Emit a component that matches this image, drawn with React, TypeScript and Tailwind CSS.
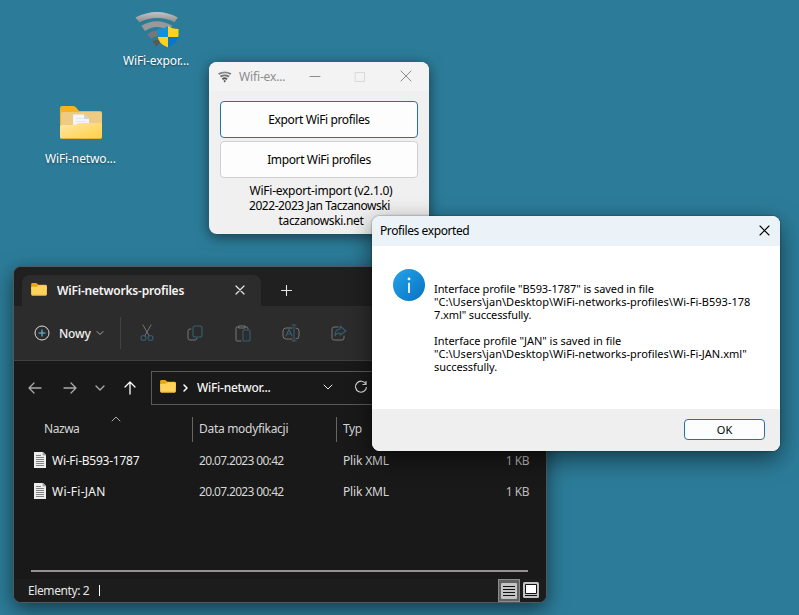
import type { ReactNode } from "react";

const glyph = "block shrink-0";

function Wifi({ className }: { className: string }) {
  return (
    <svg viewBox="0 0 48 38" className={className} fill="none">
      <defs>
        <linearGradient id="wave" x1="0" y1="0" x2="0" y2="1">
          <stop offset="0" stopColor="#c4c4c4" />
          <stop offset="1" stopColor="#8d8d8d" />
        </linearGradient>
      </defs>
      <path d="M0 6Q24 -6 46 6L42.500 11Q24 2 4.500 11Z" fill="url(#wave)" />
      <path d="M6.500 15Q23 5 40 15L36 20.500Q23 12 10.500 20.500Z" fill="#999" />
      <path d="M13 24Q23 16 33 24L29 29Q23 24 17 29Z" fill="#777" />
      <path d="M18.500 32Q23 28 27.500 32L23 38Z" fill="#595959" />
    </svg>
  );
}

function Shield() {
  return (
    <svg viewBox="0 0 22 22" className="absolute left-[22px] top-[14px] h-[22px] w-[22px]">
      <defs>
        <clipPath id="shield">
          <path d="M11 0Q7 3 .5 3V9Q1 18 11 21.500Q21 18 21.500 9V3Q15 3 11 0Z" />
        </clipPath>
      </defs>
      <g clipPath="url(#shield)">
        <path d="M0 0h11v11H0z" fill="#148fd9" />
        <path d="M11 0h11v11H11zM0 11h11v11H0z" fill="#ffd21d" />
        <path d="M11 11h11v11H11z" fill="#0b76c8" />
      </g>
    </svg>
  );
}

function BigFolder() {
  return (
    <svg viewBox="0 0 44 36" className="block h-[36px] w-[44px]">
      <defs>
        <linearGradient id="front" x1="0" y1="0" x2="1" y2="1">
          <stop offset="0" stopColor="#ffe7a3" />
          <stop offset="1" stopColor="#ffcf45" />
        </linearGradient>
      </defs>
      <path d="M1 3Q1 1 3 1H14Q16 1 17.500 3L20 6H41Q43 6 43 8V26H1Z" fill="#f6b51c" />
      <path d="M2 9Q2 7 4 7H41Q43 7 43 9V26H2Z" fill="#edcb83" />
      <path d="M14 9.500H25L30 14V25H14Z" fill="#f4f5f8" />
      <path d="M25 9.500V14H30Z" fill="#cfd2d8" />
      <path d="M17 13.500h7M17 16.500h10" stroke="#e3e5ea" />
      <path d="M1 22Q1 20 3 20H14Q16 20 18 19L20 18H41Q43 18 43 20V32Q43 34 41 34H3Q1 34 1 32Z" fill="url(#front)" />
      <path d="M2 33.500H42" stroke="#e8b23e" />
    </svg>
  );
}

function Folder() {
  return (
    <svg viewBox="0 0 17 14" className={`${glyph} mb-[2px] h-[13px] w-4`}>
      <path d="M0 1.500Q0 0 1.500 0H5.500L8 2H15.500Q17 2 17 3.500V7H0Z" fill="#e9a514" />
      <path d="M0 5Q0 4 1 4H6L8 2.500H15.500Q17 2.500 17 4V12Q17 13.500 15.500 13.500H1.500Q0 13.500 0 12Z" fill="#ffd25c" />
      <path d="M1 13H16" stroke="#eeb53b" />
    </svg>
  );
}

function Doc() {
  return (
    <svg viewBox="0 0 12 16" className={`${glyph} mb-[2px] h-4 w-3`}>
      <path d="M0 0H9L12 3V16H0Z" fill="#ededed" />
      <path d="M9 0V3H12" fill="#aaa" stroke="#888" strokeWidth=".6" />
      <path d="M2 3.500h5M2 5.500h8M2 7.500h8M2 9.500h8M2 11.500h8M2 13.500h8" stroke="#777" strokeWidth=".9" />
    </svg>
  );
}

function Line({ d, className, size = 16, w = 1 }: { d: string; className: string; size?: number; w?: number }) {
  return (
    <svg viewBox={`0 0 ${size} ${size}`} className={`${glyph} ${className}`} fill="none" stroke="currentColor" strokeWidth={w} strokeLinecap="round" strokeLinejoin="round">
      <path d={d} />
    </svg>
  );
}

function Tool({ gray, blue }: { gray: string; blue: string }) {
  return (
    <svg viewBox="0 0 18 18" className={`${glyph} h-[18px] w-[18px]`} fill="none" strokeLinecap="round" strokeLinejoin="round">
      <path d={gray} stroke="#767676" />
      <path d={blue} stroke="#365f73" strokeWidth="1.100" />
    </svg>
  );
}

function Row({ name, nameClass }: { name: string; nameClass: string }) {
  return (
    <div className="flex h-[31px] items-center pl-5 text-[#d6d6d6]">
      <Doc />
      <span className="ml-[6px] w-[147px] text-[#f5f5f5]"><span className={nameClass}>{name}</span></span>
      <span className="w-36 tracking-[-0.66px]">20.07.2023 00:42</span>
      <span className="w-[120px] tracking-[-0.15px]">Plik XML</span>
      <span className="w-[66px] text-right tracking-[-0.5px] text-[#bcbcbc]">1 KB</span>
    </div>
  );
}

function DesktopLabel({ children }: { children: ReactNode }) {
  return <span className="whitespace-nowrap tracking-[-0.12px] text-white [text-shadow:0_1px_2px_#0007]">{children}</span>;
}

export default function App() {
  return (
    <main className="relative h-[615px] w-[799px] overflow-hidden bg-[#2c7c99] font-['Noto_Sans','Open_Sans',sans-serif] text-[12px] leading-[15px]">
      <div className="absolute left-[116px] top-[12px] flex w-20 flex-col">
        <div className="relative ml-[19px] h-[41px]">
          <Wifi className="h-[35px] w-[45px]" />
          <Shield />
        </div>
        <span className="ml-[7px] whitespace-nowrap"><DesktopLabel>WiFi-expor...</DesktopLabel></span>
      </div>
      <div className="absolute left-[45px] top-[105px] flex flex-col">
        <div className="ml-[14px] h-[46px]"><BigFolder /></div>
        <DesktopLabel>WiFi-netwo...</DesktopLabel>
      </div>

      <section className="absolute left-[209px] top-[62px] flex h-[172px] w-[220px] flex-col rounded-lg bg-[#f0f0f0] shadow-[0_3px_14px_#0008]">
        <header className="flex h-[29px] items-center rounded-t-lg bg-[#f3f3f3] pl-[9px] text-[#8c8c8c]">
          <Wifi className="h-3 w-[14px] shrink-0 brightness-75" />
          <span className="ml-[7px] w-[70px] tracking-[-0.15px]">Wifi-ex...</span>
          <Line d="M1 5.500H11" size={12} className="h-3 w-3" />
          <Line d="M1.500 1.500H10.500V10.500H1.500Z" size={12} className="ml-[33px] h-3 w-3 text-[#d9d9d9]" />
          <Line d="M1 1L11 11M11 1L1 11" size={12} className="ml-[34px] mb-[2px] h-3 w-3" />
        </header>
        <div className="flex flex-col gap-[3px] px-[11px] pt-[10px] tracking-[-0.38px] text-black">
          <button className="h-[37px] rounded-[4px] border border-[#2372ac] bg-[#fdfdfd]">Export WiFi profiles</button>
          <button className="h-[37px] rounded-[4px] border border-[#d0d0d0] bg-[#fdfdfd]">Import WiFi profiles</button>
        </div>
        <div className="mt-[5px] flex flex-col items-center pl-1 text-black">
          <span className="tracking-[-0.26px]">WiFi-export-import (v2.1.0)</span>
          <span className="mr-[3px] tracking-[-0.45px]">2022-2023 Jan Taczanowski</span>
          <span className="tracking-[-0.35px]">taczanowski.net</span>
        </div>
      </section>

      <section className="absolute left-[13px] top-[266px] flex h-[337px] w-[534px] flex-col overflow-hidden rounded-lg border border-[#4e5a5e] bg-[#191919] text-[#e6e6e6] shadow-[0_6px_20px_#0008]">
        <header className="flex h-[39px] shrink-0 items-end bg-[#202020] pl-2">
          <div className="flex h-[31px] w-[239px] items-center rounded-t-lg bg-[#2c2c2c] pl-[9px]">
            <Folder />
            <strong className="ml-[10px] w-[178px] font-semibold tracking-[-0.2px] text-[#f5f5f5]">WiFi-networks-profiles</strong>
            <Line d="M1 1L9 9M9 1L1 9" size={10} w={1.2} className="mb-[2px] h-[10px] w-[10px]" />
          </div>
          <Line d="M6.500 .5V10.500M1.500 5.500H11.500" size={12} w={1.1} className="mb-[9px] ml-[19px] h-3 w-3" />
        </header>
        <div className="flex h-[55px] shrink-0 items-center border-b border-[#414141] bg-[#2c2c2c] pl-5">
          <svg viewBox="0 0 16 16" className="h-4 w-4" fill="none">
            <circle cx="8" cy="8" r="7" stroke="#ddd" />
            <path d="M8 4.500V11.500M4.500 8H11.500" stroke="#65c6ef" strokeWidth="1.100" />
          </svg>
          <span className="ml-[9px] w-[37px] font-medium tracking-[-0.2px] text-[#f0f0f0]">Nowy</span>
          <Line d="M1 2.500L4 5.500L7 2.500" size={8} className="h-2 w-2 text-[#aaa]" />
          <i className="ml-4 h-8 w-px bg-[#434343]" />
          <div className="ml-[17px] flex gap-[30px]">
            <Tool gray="M5 1L11.300 12M13 1L6.700 12" blue="M8 14A2.500 2.500 0 1 1 3 14A2.500 2.500 0 1 1 8 14M15 14A2.500 2.500 0 1 1 10 14A2.500 2.500 0 1 1 15 14" />
            <Tool gray="M5 5H4Q2 5 2 7V14Q2 16 4 16H9Q11 16 11 14" blue="M9 2H14Q16 2 16 4V11Q16 13 14 13H9Q7 13 7 11V4Q7 2 9 2Z" />
            <Tool gray="M5 3H3Q2 3 2 4V16Q2 17 3 17H7M11 3H13Q14 3 14 5M5 2H11V4H5Z" blue="M10 6H15Q16 6 16 7V16Q16 17 15 17H10Q9 17 9 16V7Q9 6 10 6Z" />
            <Tool gray="M10 4H4Q1 4 1 7V12Q1 15 4 15H10M14 4Q17 4 17 7V12Q17 15 14 15" blue="M12 1V17M10 1H14M10 17H14M4 12L7 5.500L10 12M5 10H9" />
            <Tool gray="M8 3H4Q2 3 2 5V14Q2 16 4 16H12Q14 16 14 14V12" blue="M10 2L16 7L10 11V9Q6 9 5 12Q5 5 10 5Z" />
          </div>
        </div>
        <div className="flex h-[54px] shrink-0 items-center pl-[14px]">
          <Line d="M13 7H1M6 2L1 7L6 12" size={14} w={1.3} className="h-[14px] w-[14px] text-[#aaa]" />
          <Line d="M1 7H13M8 2L13 7L8 12" size={14} w={1.3} className="ml-[21px] h-[14px] w-[14px] text-[#aaa]" />
          <Line d="M1 3L5 7L9 3" size={10} w={1.3} className="ml-[18px] h-[10px] w-[10px] text-[#aaa]" />
          <Line d="M7 13V1M2 6L7 1L12 6" size={14} w={1.3} className="ml-[18px] h-[14px] w-[14px] text-white" />
          <div className="ml-[14px] flex h-[34px] w-[350px] items-center border border-[#5b5b5b] pb-[2px] pl-[8px]">
            <Folder />
            <Line d="M3 2L6 5L3 8" size={10} w={1.5} className="ml-[5px] mt-[2px] h-[10px] w-[10px] text-white" />
            <span className="ml-[6px] w-[126px] font-medium tracking-[-0.25px] text-[#f5f5f5]">WiFi-networ...</span>
            <Line d="M1 3L5 7L9 3" size={10} className="h-[10px] w-[10px]" />
            <svg viewBox="0 0 14 14" className="ml-[21px] h-[14px] w-[14px]" fill="none" stroke="#ddd" strokeWidth="1.200">
              <path d="M11.800 4A5.500 5.500 0 1 0 12.500 7M12 1V4.500H8.500" />
            </svg>
          </div>
        </div>
        <div className="flex h-[29px] shrink-0 items-center pl-[30px] text-[#d6d6d6]">
          <span className="mb-[2px] w-[67px] tracking-[-0.45px]">Nazwa</span>
          <Line d="M1 6L5 2L9 6" size={10} className="mb-[20px] h-[10px] w-[10px] text-[#aaa]" />
          <i className="ml-[71px] h-[25px] w-px bg-[#666]" />
          <span className="mb-[2px] ml-[6px] w-[137px] tracking-[-0.3px]">Data modyfikacji</span>
          <i className="h-[25px] w-px bg-[#666]" />
          <span className="mb-[2px] ml-[6px] tracking-[-0.4px]">Typ</span>
        </div>
        <div className="mt-px">
          <Row name="Wi-Fi-B593-1787" nameClass="tracking-[-0.25px]" />
          <Row name="Wi-Fi-JAN" nameClass="tracking-[0.25px]" />
        </div>
        <div className="ml-[17px] mt-auto h-[2px] w-[497px] shrink-0 bg-[#969291]" />
        <footer className="mt-[7px] flex h-[23px] shrink-0 items-center bg-[#1c1c1c] pl-[14px]">
          <span className="w-[71px] tracking-[-0.4px]">Elementy: 2</span>
          <i className="h-[11px] w-px bg-white" />
          <div className="ml-auto flex h-[23px] w-[22px] items-center justify-center border border-[#8b8b8b] bg-[#626262]">
            <svg viewBox="0 0 16 16" className="h-4 w-4"><rect width="16" height="16" rx="1" fill="#c4c4c4" /><path d="M2 3.500h12M2 6.500h12M2 9.500h12M2 12.500h12" stroke="#111" /></svg>
          </div>
          <svg viewBox="0 0 16 16" className="mb-px ml-[3px] mr-[7px] h-4 w-4"><rect width="16" height="16" rx="1.500" fill="#c4c4c4" /><path d="M2.500 2.500h11v9h-11z" fill="white" stroke="#111" /><path d="M2 13.500h12" stroke="#111" /></svg>
        </footer>
      </section>

      <section className="absolute left-[372px] top-[216px] flex h-[235px] w-[408px] flex-col overflow-hidden rounded-lg bg-white text-black shadow-[0_8px_24px_#0008,0_0_2px_#0008]">
        <header className="flex h-[30px] items-center justify-between bg-[#ebf3f9] pb-[2px] pl-2 pr-[10px]">
          <span className="tracking-[-0.4px]">Profiles exported</span>
          <Line d="M1 1L10 10M10 1L1 10" size={11} w={1.1} className="h-[11px] w-[11px]" />
        </header>
        <div className="flex h-[163px] pl-[21px]">
          <div className="mt-[23px] flex h-8 w-8 shrink-0 items-center justify-center rounded-full bg-linear-to-br from-[#24a4e8] to-[#0872c4]">
            <svg viewBox="0 0 4 18" className="h-[17px] w-1"><circle cx="2" cy="2" r="1.500" fill="white" /><path d="M2 6V17" stroke="white" strokeWidth="1.800" /></svg>
          </div>
          <div className="ml-[9px] mt-[36px] flex flex-col whitespace-nowrap text-[11px] leading-[13px]">
            <span className="tracking-[-0.1px]">Interface profile "B593-1787" is saved in file</span>
            <span className="tracking-[0.02px]">"C:\Users\jan\Desktop\WiFi-networks-profiles\Wi-Fi-B593-178</span>
            <span className="tracking-[-0.1px]">7.xml" successfully.</span>
            <span className="mt-[13px] tracking-[-0.02px]">Interface profile "JAN" is saved in file</span>
            <span className="tracking-[0.02px]">"C:\Users\jan\Desktop\WiFi-networks-profiles\Wi-Fi-JAN.xml"</span>
            <span className="tracking-[-0.05px]">successfully.</span>
          </div>
        </div>
        <footer className="flex flex-1 items-start justify-end bg-[#efefef] pr-[15px] pt-[10px]">
          <button className="h-[21px] w-[81px] rounded-[4px] border border-[#2372ac] bg-[#fdfdfd] text-[11px] leading-none">OK</button>
        </footer>
      </section>
    </main>
  );
}
